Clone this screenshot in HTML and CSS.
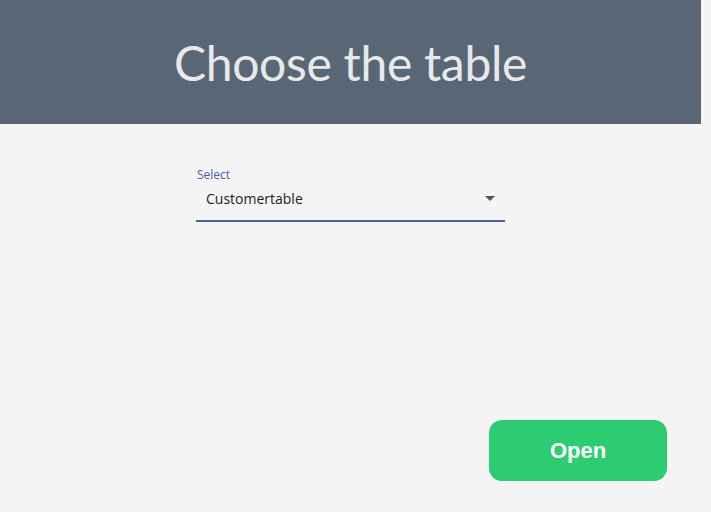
FILE: index.html
```html
<!DOCTYPE html>
<html>
<head>
<meta charset="utf-8">
<link rel="stylesheet" href="styles.css">
</head>
<body>
<div class="page">
  <header class="header">
    <h1 class="title">Choose the table</h1>
  </header>
  <main class="content">
    <div class="field">
      <label class="field-label">Select</label>
      <div class="field-control">
        <span class="field-value">Customertable</span>
        <span class="arrow"></span>
      </div>
    </div>
    <div class="actions">
      <button class="open-btn">Open</button>
    </div>
  </main>
</div>
</body>
</html>
```
FILE: styles.css
```css
html, body {
  margin: 0;
  padding: 0;
  background: #f4f4f4;
  width: 711px;
  height: 512px;
  overflow: hidden;
}
.page {
  width: 701px;
}
.header {
  background: #586676;
  height: 124px;
  display: flex;
  align-items: center;
  justify-content: center;
}
.title {
  margin: 0;
  font-family: Lato, sans-serif;
  font-weight: 400;
  font-size: 48px;
  color: #e8e8e8;
  letter-spacing: -0.3px;
}
.content {
  display: flex;
  flex-direction: column;
}
.field {
  margin-top: 44px;
  margin-left: 196px;
  width: 309px;
  display: flex;
  flex-direction: column;
}
.field-label {
  font-family: "Open Sans", "Noto Sans", sans-serif;
  font-size: 12px;
  color: #4a5fa8;
  padding-left: 1px;
  line-height: 14px;
}
.field-control {
  display: flex;
  align-items: center;
  justify-content: space-between;
  height: 33px;
  padding: 0 10px 5px 10px;
  border-bottom: 2px solid #4a5fa8;
}
.field-value {
  font-family: "Open Sans", "Noto Sans", sans-serif;
  font-size: 14px;
  color: #222;
}
.arrow {
  width: 0;
  height: 0;
  border-left: 5px solid transparent;
  border-right: 5px solid transparent;
  border-top: 5px solid #555;
}
.actions {
  display: flex;
  justify-content: flex-end;
  margin-top: 198px;
  padding-right: 34px;
}
.open-btn {
  width: 178px;
  height: 61px;
  border: none;
  border-radius: 13px;
  background: #2ecc71;
  color: #fff;
  font-family: "Liberation Sans", Arial, sans-serif;
  font-weight: 700;
  font-size: 22px;
  cursor: pointer;
}
```
